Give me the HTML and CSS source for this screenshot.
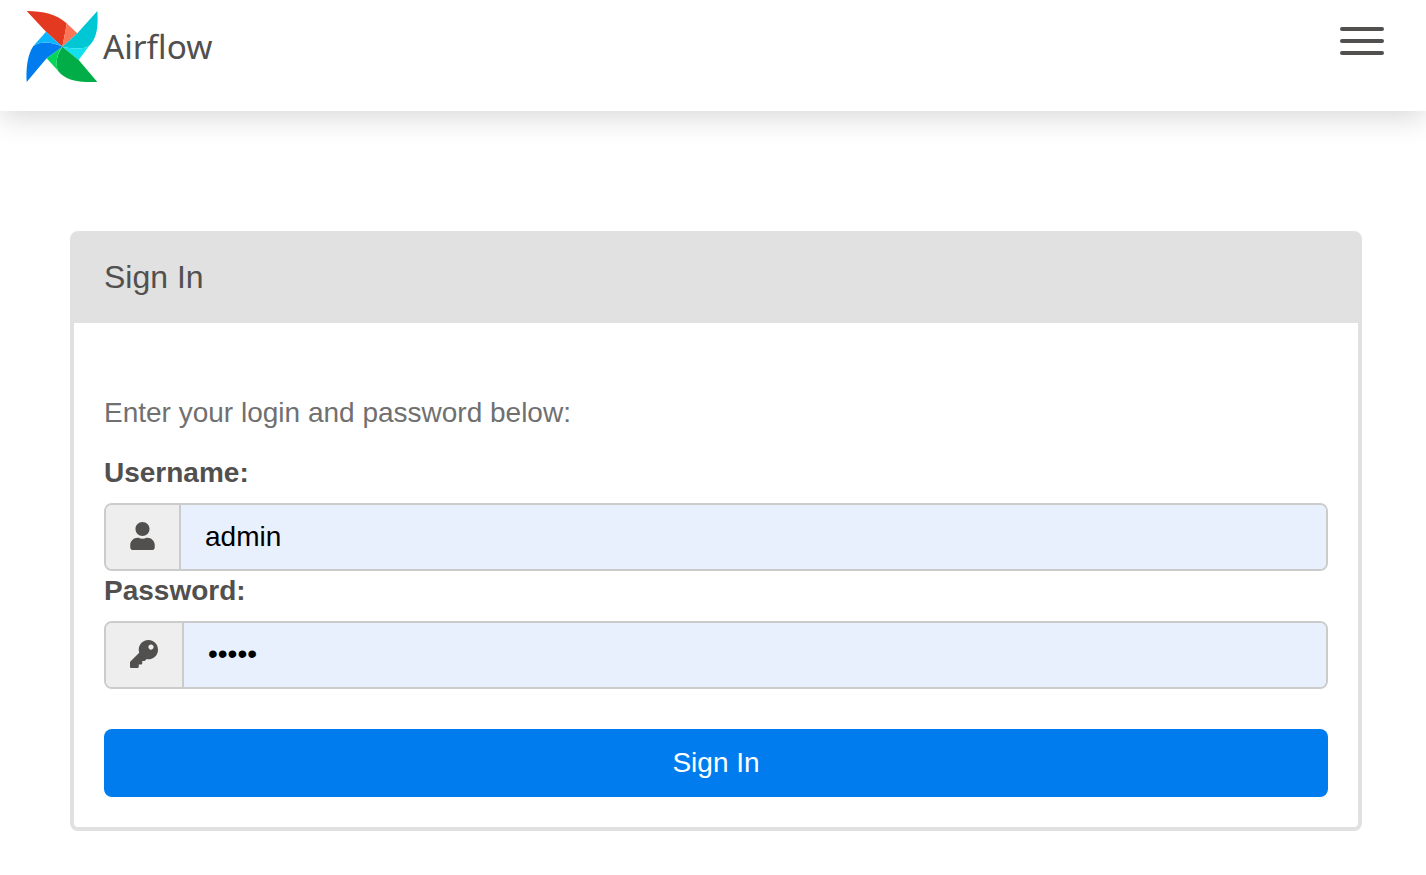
FILE: index.html
```html
<!DOCTYPE html>
<html lang="en">
<head>
  <meta charset="UTF-8" />
  <title>Sign In - Airflow</title>
  <link rel="stylesheet" href="styles.css">
</head>
<body>

  <header class="topbar">
    <a href="#" class="brand">
      <svg class="logo" viewBox="18 18 216 213" aria-hidden="true">
        <path fill="#e43921" d="M20 18C70 18 110 28 140 55C137 80 131 105 127 125L78 80Z"/>
        <path fill="#ff7557" d="M140 55L172 85L127 125C131 105 137 80 140 55Z"/>
        <path fill="#00c7d4" d="M232 18C235 60 232 100 207 123C185 135 150 130 127 125L172 85Z"/>
        <path fill="#11e1ee" d="M127 125C150 130 185 135 207 123L176 165Z"/>
        <path fill="#00ad46" d="M232 231C190 232 140 232 114 197C105 175 110 150 127 125L176 165Z"/>
        <path fill="#04d659" d="M127 125L80 160L114 197C105 170 112 145 127 125Z"/>
        <path fill="#017cee" d="M20 231C18 190 22 150 40 123C65 105 100 112 127 125L80 160Z"/>
        <path fill="#0cb6ff" d="M78 80L40 123C65 105 100 112 127 125Z"/>
      </svg>
      <span class="brand-name">Airflow</span>
    </a>
    <button class="menu-toggle" aria-label="Toggle navigation">
      <span></span>
      <span></span>
      <span></span>
    </button>
  </header>

  <main class="content">
    <div class="card">
      <div class="card-title">Sign In</div>
      <form class="card-body">
        <p class="intro">Enter your login and password below:</p>

        <label for="username">Username:</label>
        <div class="input-group">
          <span class="addon">
            <svg class="icon icon-user" viewBox="0 0 448 512" aria-hidden="true"><path d="M224 256c70.7 0 128-57.3 128-128S294.7 0 224 0 96 57.3 96 128s57.3 128 128 128zm89.6 32h-16.7c-22.2 10.2-46.9 16-72.9 16s-50.6-5.8-72.9-16h-16.7C60.2 288 0 348.2 0 422.4V464c0 26.5 21.5 48 48 48h352c26.5 0 48-21.5 48-48v-41.6c0-74.2-60.2-134.4-134.4-134.4z"/></svg>
          </span>
          <input type="text" id="username" value="admin" />
        </div>

        <label for="password">Password:</label>
        <div class="input-group">
          <span class="addon">
            <svg class="icon icon-key" viewBox="0 0 512 512" aria-hidden="true"><path d="M512 176.001C512 273.203 433.202 352 336 352c-11.22 0-22.19-1.062-32.827-3.069l-24.012 27.014A23.999 23.999 0 0 1 261.223 384H224v40c0 13.255-10.745 24-24 24h-40v40c0 13.255-10.745 24-24 24H24c-13.255 0-24-10.745-24-24v-78.059c0-6.365 2.529-12.47 7.029-16.971l161.802-161.802C163.108 213.814 160 195.271 160 176 160 78.798 238.797.001 335.999 0 433.488-.001 512 78.511 512 176.001zM336 128c0 26.51 21.49 48 48 48s48-21.49 48-48-21.49-48-48-48-48 21.49-48 48z"/></svg>
          </span>
          <input type="password" id="password" class="password" value="admin" />
        </div>

        <button type="button" class="submit">Sign In</button>
      </form>
    </div>
  </main>

</body>
</html>
```

FILE: styles.css
```css
body {
  margin: 0;
  font-family: "Liberation Sans", Arial, sans-serif;
  font-size: 28px;
  color: #51504f;
  background: white;
}
.topbar {
  height: 111px;
  padding: 0 42px 0 26px;
  box-sizing: border-box;
  display: flex;
  justify-content: space-between;
  align-items: flex-start;
  background: white;
  box-shadow: 0 6px 28px rgba(0,0,0,0.16);
}
.brand {
  display: flex;
  align-items: center;
  gap: 5px;
  margin-top: 11px;
  text-decoration: none;
  color: #51504f;
}
.logo {
  width: 72px;
  height: 71px;
}
.brand-name {
  font-family: "Noto Sans", sans-serif;
  font-size: 33.3px;
  margin-bottom: 2px;
}
.menu-toggle {
  display: flex;
  flex-direction: column;
  gap: 8px;
  margin-top: 27px;
  padding: 0;
  border: none;
  background: none;
  cursor: pointer;
}
.menu-toggle span {
  display: block;
  width: 44px;
  height: 4px;
  border-radius: 2px;
  background: #51504f;
}
.content {
  padding: 120px 64px 44px 70px;
}
.card {
  border: 4px solid #e1e1e1;
  border-radius: 8px;
  background: white;
}
.card-title {
  height: 88px;
  padding-left: 30px;
  font-size: 32px;
  line-height: 84px;
  background: #e1e1e1;
}
.card-body {
  padding: 69px 30px 30px;
}
.intro {
  margin: 0 0 19px;
  line-height: 42px;
  font-size: 28px;
  color: #707070;
}
label {
  display: block;
  margin-bottom: 10px;
  line-height: 40px;
  font-weight: bold;
}
.input-group {
  display: flex;
  height: 68px;
  box-sizing: border-box;
  border: 2px solid #cbcbcb;
  border-radius: 8px;
  overflow: hidden;
}
.addon {
  display: flex;
  align-items: center;
  padding: 0 24px 2px;
  background: #eeeeee;
  border-right: 2px solid #cbcbcb;
}
.icon {
  fill: #51504f;
  display: block;
}
.icon-user {
  width: 25px;
  height: 28px;
}
.icon-key {
  width: 28px;
  height: 28px;
}
input {
  flex: 1;
  min-width: 0;
  padding: 0 24px;
  border: none;
  outline: none;
  font-family: inherit;
  font-size: 28px;
  color: black;
  background: #e8f0fe;
}
.password {
  padding-bottom: 2px;
}
.submit {
  display: block;
  width: 100%;
  height: 68px;
  margin-top: 40px;
  border: none;
  border-radius: 8px;
  font-family: inherit;
  font-size: 28px;
  color: white;
  background: #017cee;
  cursor: pointer;
}
```
